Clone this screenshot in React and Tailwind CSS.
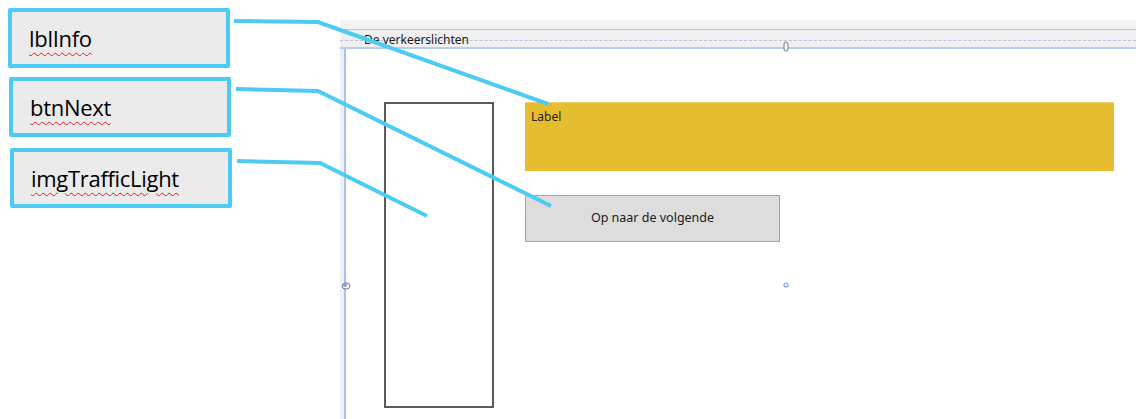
const CALLOUTS = [
  { name: 'lblInfo', cls: 'ml-[8px] mt-[8px]' },
  { name: 'btnNext', cls: 'ml-[9px] mt-[9px]' },
  { name: 'imgTrafficLight', cls: 'ml-[10px] mt-[11px]' },
];

function Callout({ name, cls }) {
  return (
    <div className={`${cls} w-[222px] h-[60px] border-[4px] border-[#4ccbf5] rounded-[2px] bg-[#ebebeb] flex items-center pl-[17px]`}>
      <span className="text-[22px] text-black underline decoration-wavy decoration-[#e02020] decoration-1 underline-offset-[5px] [font-family:'Open_Sans',sans-serif] tracking-[-0.3px]">
        {name}
      </span>
    </div>
  );
}

function Connectors() {
  return (
    <svg className="absolute inset-0 pointer-events-none" width="1136" height="419">
      <g stroke="#4ccbf5" strokeWidth="4" fill="none" strokeLinecap="butt">
        <polyline points="234,21 318,22 548,104" />
        <polyline points="236,89 318,91 551,206" />
        <polyline points="237,161 320,163 427,216" />
      </g>
      <circle cx="786" cy="285" r="2" fill="none" stroke="#7d9ef0" strokeWidth="1.2" />
      <rect x="784" y="42" width="4" height="9" rx="2" fill="#fff" stroke="#777" strokeWidth="1" />
      <ellipse cx="346" cy="286" rx="4" ry="3" fill="#fff" stroke="#777" strokeWidth="1" />
      <circle cx="345" cy="285" r="2" fill="#7d9ef0" />
    </svg>
  );
}

export default function App() {
  return (
    <div className="relative w-[1136px] h-[419px] bg-white overflow-hidden flex [font-family:'Noto_Sans',sans-serif]">
      <div className="w-[340px] shrink-0 flex flex-col">
        {CALLOUTS.map(c => <Callout key={c.name} {...c} />)}
      </div>

      <div className="flex-1 flex flex-col pt-[20px]">
        <div className="h-[9px] bg-[#f3f3f3]" />
        <div className="h-[18px] bg-[#f0f0f0] border-t border-[#c4c4c4] flex flex-col">
          <div className="h-[11px] pl-[24px] text-[12px] leading-[20px] text-[#1a1a1a] border-b border-dashed border-[#b8c4dc]">
            De verkeerslichten
          </div>
          <div className="flex-1" />
        </div>
        <div className="h-[2px] bg-[#b9cdf3]" />
        <div className="flex-1 flex">
          <div className="w-[6px] bg-[#eef0f4] border-r-[2px] border-[#a9c0f2]" />
          <div className="flex-1 flex pt-[53px] pl-[38px] gap-[31px]">
            <div className="w-[110px] h-[306px] border-2 border-[#5a5a5a]" />
            <div className="flex flex-col gap-[24px]">
              <div className="w-[589px] h-[69px] bg-[#e6bd2e] border-t border-[#ecd07a] pl-[6px] pt-[5px] text-[12px] text-[#1f1f1f]">
                Label
              </div>
              <div className="w-[255px] h-[47px] bg-[#dddddd] border border-[#a3a3a3] flex items-center justify-center text-[12.5px] text-[#1a1a1a]">
                Op naar de volgende
              </div>
            </div>
          </div>
        </div>
      </div>

      <Connectors />
    </div>
  );
}
